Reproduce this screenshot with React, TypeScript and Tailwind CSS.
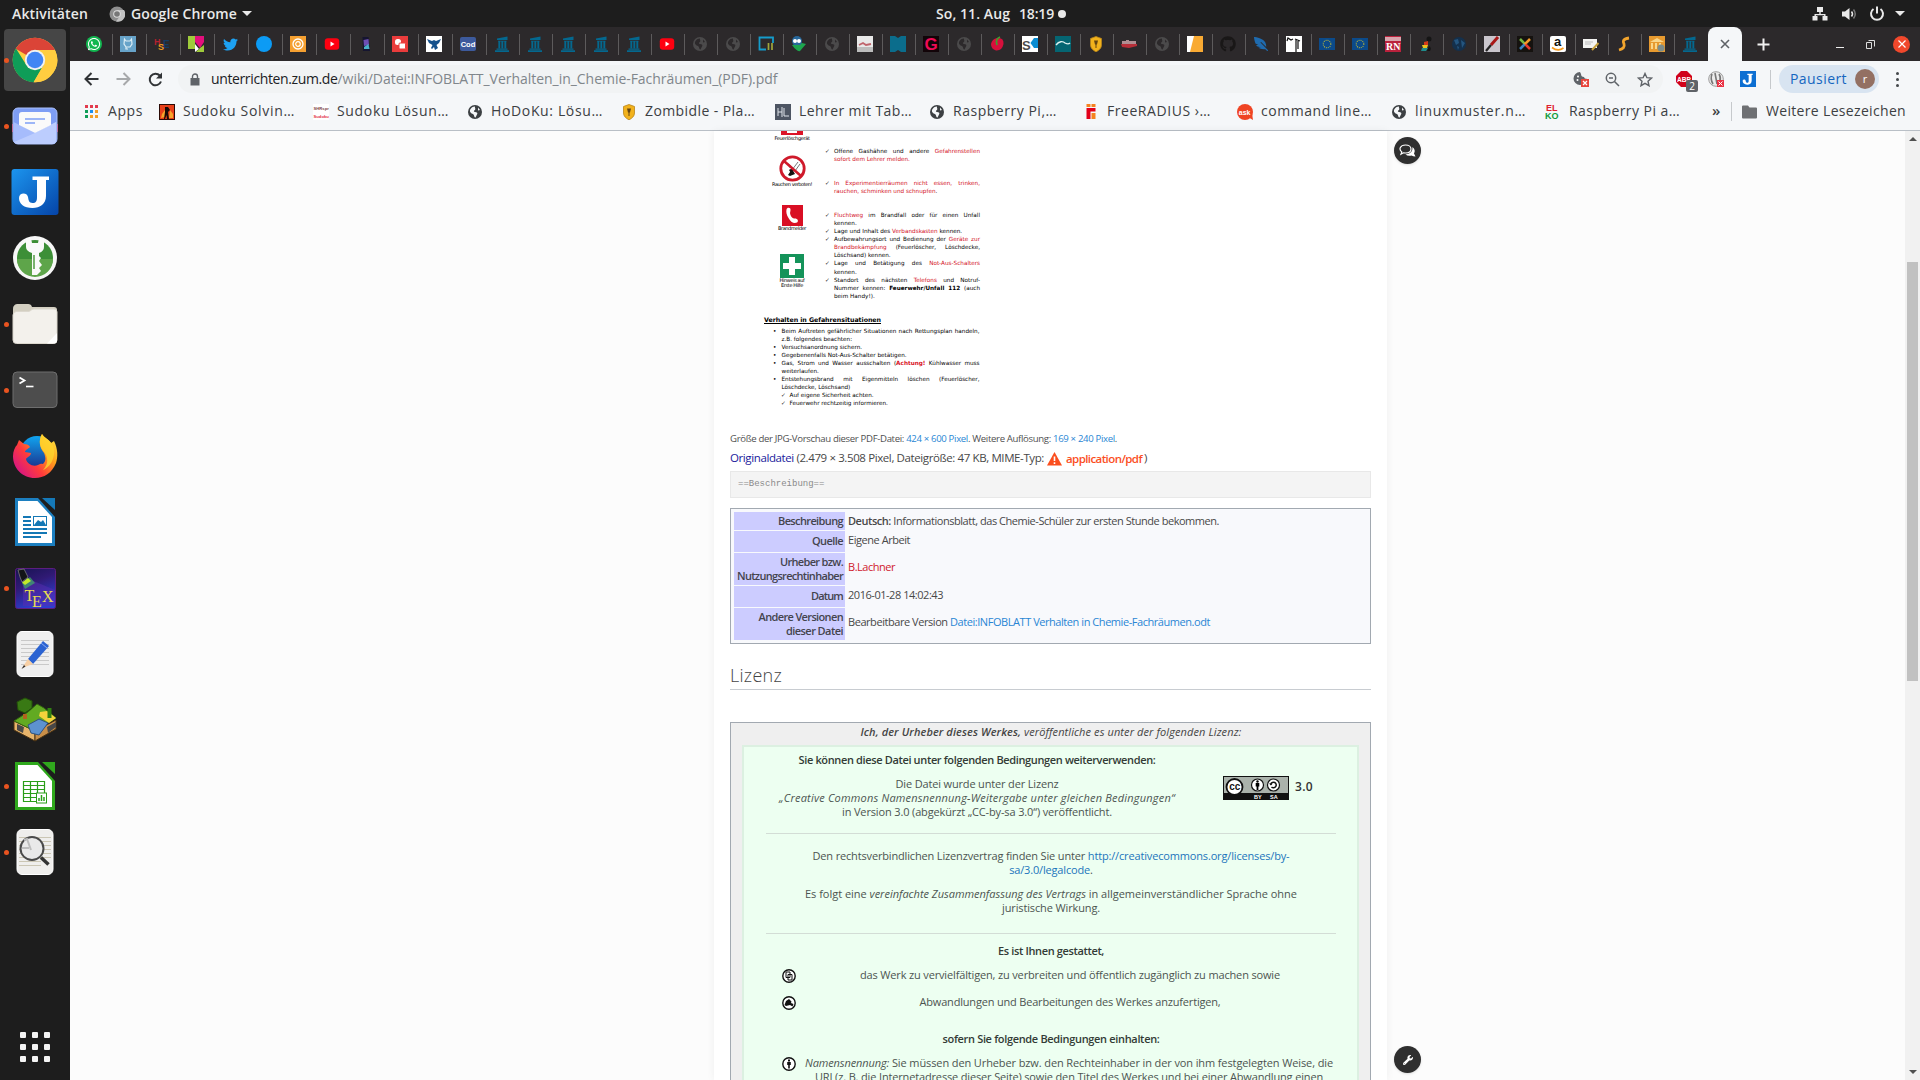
import React, { useLayoutEffect, useRef, useState } from "react";
import { FaWhatsapp, FaTwitter, FaGithub, FaWrench, FaFeatherAlt } from "react-icons/fa";

/** A single line of text whose tracking is computed so that it spans the given width. */
function Fit({ w, className = "", children }: { w: number; className?: string; children: React.ReactNode }) {
  const ref = useRef<HTMLSpanElement>(null);
  const [sp, setSp] = useState<number | null>(null);
  useLayoutEffect(() => {
    const el = ref.current;
    if (!el || sp !== null) return;
    const n = (el.textContent || "").length || 1;
    setSp((w - el.getBoundingClientRect().width) / n);
  }, [w, sp]);
  return (
    <span ref={ref} className={"inline-block shrink-0 whitespace-nowrap " + className} style={{ letterSpacing: sp === null ? undefined : `${sp}px` }}>
      {children}
    </span>
  );
}

/* ---------- dock ---------- */

function ChromeLogo() {
  return (
    <svg width="48" height="48" viewBox="0 0 48 48">
      <circle cx="24" cy="24" r="22.3" fill="#ffcd40" />
      <path d="M24 24 L4.7 12.8 A22.3 22.3 0 0 1 43.3 12.8 L43.7 14 H24 Z" fill="#db4437" />
      <path d="M4.7 12.8 A22.3 22.3 0 0 0 22.6 46.3 L32.6 29 L24 24 L15.3 29 L5 12.4 Z" fill="#0f9d58" />
      <path d="M24 14 H43.9 A22.3 22.3 0 0 1 22.6 46.3 L32.7 29 Z" fill="#ffcd40" />
      <circle cx="24" cy="24" r="10.2" fill="#f1f1f1" />
      <circle cx="24" cy="24" r="8.3" fill="#4285f4" />
    </svg>
  );
}
function MailLogo() {
  return (
    <svg width="48" height="48" viewBox="0 0 48 48">
      <rect x="1" y="22" width="46" height="8" fill="#d81b3c" />
      <rect x="2" y="6" width="44" height="36" rx="5" fill="#7e9ef5" stroke="#a9bffb" />
      <path d="M2.500 20 L24 31 L45.500 20 V38 a4 4 0 0 1-4 4 H6.500 a4 4 0 0 1-4-4z" fill="#a6bcfc" />
      <path d="M3 40 L24 31 L45 20 V38 a4 4 0 0 1-4 4 H6z" fill="#bccdfe" />
      <path d="M8 23 V13 a3 3 0 0 1 3-3 H37 a3 3 0 0 1 3 3 V23 L24 31z" fill="#fafafa" />
      <path d="M14 17 H34 M14 21 H24" stroke="#9db6f7" strokeWidth="2" />
    </svg>
  );
}
function JoplinLogo() {
  return (
    <svg width="48" height="48" viewBox="0 0 48 48">
      <defs>
        <linearGradient id="jop" x1="0" y1="0" x2="1" y2="1">
          <stop offset="0" stopColor="#1c95ee" />
          <stop offset="1" stopColor="#0544a8" />
        </linearGradient>
      </defs>
      <rect x="0.500" y="1" width="47" height="46" rx="3" fill="url(#jop)" />
      <path d="M21.500 8.500 H38 V12 H35 V28 C35 36 29 40 21.500 40 C13 40 8 36 8 30 C8 24.500 16 24 17 29 C17.500 32 18 35 21.500 35 C25 35 26 33 26 29 V12 H21.500z" fill="#fff" />
    </svg>
  );
}
function KeyLogo() {
  return (
    <svg width="48" height="48" viewBox="0 0 48 48">
      <circle cx="24" cy="24" r="22" fill="#f7f7f7" />
      <circle cx="24" cy="24" r="18" fill="#3d8f37" />
      <path d="M6 25 A18 18 0 0 0 42 25z" fill="#5ea54a" />
      <path d="M15 5 Q15 4 20 4 L21 9 H27 L28 4 Q33 4 33 6 V13 Q33 17 28 19 V22 L30 24 L28 27 L31 31 L28 34 L30 37 L26 41 H21 V19 Q15 17 15 13z" fill="#fafafa" />
      <path d="M23 21 V35" stroke="#4f9a40" strokeWidth="1.500" />
    </svg>
  );
}
function FolderLogo() {
  return (
    <svg width="48" height="48" viewBox="0 0 48 48">
      <path d="M2 9 a5 5 0 0 1 4-5 H17 a4 4 0 0 1 4 3 H43 a3 3 0 0 1 3 3 V24 H2z" fill="#d3cfc1" />
      <path d="M2 15 a4 4 0 0 1 3-3.500 H17 C20 11.500 20 9 23 9 H43 a3 3 0 0 1 3 3 V40 a3.500 3.500 0 0 1-3.500 3.500 H5.500 A3.500 3.500 0 0 1 2 40z" fill="#f3f1ec" stroke="#dcd8ce" />
      <path d="M46 33 L36 43.500 H43 a3 3 0 0 0 3-3z" fill="#fff" />
    </svg>
  );
}
function TerminalLogo() {
  return (
    <svg width="48" height="48" viewBox="0 0 48 48">
      <rect x="2" y="6" width="44" height="35.500" rx="4" fill="#4d4d4d" stroke="#6e6e6e" />
      <path d="M8.500 11.500 L13.500 14.500 L8.500 17.500" fill="none" stroke="#fff" strokeWidth="1.800" />
      <path d="M15 20.500 H22.500" stroke="#fff" strokeWidth="1.600" />
    </svg>
  );
}
function FirefoxLogo() {
  return (
    <svg width="48" height="48" viewBox="0 0 48 48">
      <defs>
        <linearGradient id="ffx" x1="1" y1="0" x2="0" y2="0.800">
          <stop offset="0" stopColor="#fff14c" />
          <stop offset="0.350" stopColor="#ffa21a" />
          <stop offset="0.650" stopColor="#ff3b3b" />
          <stop offset="1" stopColor="#d2128b" />
        </linearGradient>
        <linearGradient id="ffb" x1="0" y1="0" x2="0" y2="1">
          <stop offset="0" stopColor="#10a5f0" />
          <stop offset="1" stopColor="#1b2a86" />
        </linearGradient>
      </defs>
      <circle cx="26" cy="21" r="17" fill="url(#ffb)" />
      <path d="M31 2 C33 6 38 7 40 11 L43 9 C47 17 47 25 45 31 C41 41 33 46 24 46 C11 46 2 36 2 24 C2 19 4 15 6 13 L8 8 L13 12 C16 12 18 13 19 15 C17 17 14 18 14 20 L20 21 C20 24 16 25 15 27 C16 32 22 35 27 33 C30 31 32 32 32 32 C35 29 35 26 33 21 C29 16 27 9 31 2z" fill="url(#ffx)" />
      <path d="M31 2 C33 6 38 7 41 12 C46 20 42 34 32 38 C38 32 37 25 33 20 C29 16 27 9 31 2z" fill="#ffd62e" opacity="0.800" />
    </svg>
  );
}
function WriterLogo() {
  return (
    <svg width="48" height="48" viewBox="0 0 48 48">
      <path d="M4 0 H27 L44 19 V48 H4z" fill="#1c7fc0" />
      <path d="M31 0 H44 V12 Z" fill="#1579b8" />
      <path d="M7 3 H26.500 L41 19 V45 H7z" fill="#fff" />
      <path d="M12 19 H20 M12 23 H20 M12 27 H20 M12 31 H36 M12 35 H36 M12 39 H30" stroke="#1478b5" strokeWidth="1.800" />
      <rect x="22.500" y="18.500" width="13" height="9" fill="#fff" stroke="#1478b5" />
      <path d="M23 27 L27 22 L30 24 L32 22 L35 27z" fill="#1478b5" />
    </svg>
  );
}
function TexLogo() {
  return (
    <svg width="48" height="48" viewBox="0 0 48 48">
      <defs>
        <linearGradient id="tex" x1="0" y1="0" x2="0.400" y2="1">
          <stop offset="0" stopColor="#161450" />
          <stop offset="0.450" stopColor="#301a75" />
          <stop offset="1" stopColor="#2d3ed0" />
        </linearGradient>
      </defs>
      <rect x="4.500" y="4.500" width="40" height="40" rx="2" fill="url(#tex)" stroke="#5c1d80" />
      <path d="M12 22 L20 16 L44 26 V42 H12z" fill="#5a2bb0" opacity="0.500" />
      <path d="M11 19 L19 13 L24 19 L14 25z" fill="#3fae6a" opacity="0.700" />
      <path d="M11 18.500 L17 14 L20 17 L14 21z" fill="#c2ea2a" />
      <path d="M7 6 L13 5 L15 9 L17 13 L11 18 L9 13z" fill="#121417" stroke="#7b7b7b" strokeWidth="0.800" />
      <text x="13.500" y="37" fontFamily="Liberation Serif" fontSize="16" fill="#e8dc50">T</text>
      <text x="21" y="42.500" fontFamily="Liberation Serif" fontSize="16" fill="#e8dc50">E</text>
      <text x="31" y="38" fontFamily="Liberation Serif" fontSize="16" fill="#e8dc50">X</text>
    </svg>
  );
}
function EditorLogo() {
  return (
    <svg width="48" height="48" viewBox="0 0 48 48">
      <rect x="6" y="1.500" width="36" height="45" rx="5" fill="#efefef" stroke="#fff" />
      <path d="M10 10.500 H38 M10 14.500 H38 M10 18.500 H38 M10 22.500 H38 M10 26.500 H38 M10 30.500 H38 M10 34.500 H38" stroke="#c9c9c9" />
      <path d="M17 29 L32 11 L38 16 L22 34z" fill="#2b63d2" />
      <path d="M17 29 L22 34 L11 38z" fill="#f7cfa4" />
      <path d="M13 35 L14.500 36.500 L10.500 39z" fill="#333" />
      <path d="M30 13 L36 18" stroke="#87aaf3" />
    </svg>
  );
}
function MinetestLogo() {
  return (
    <svg width="48" height="48" viewBox="0 0 48 48">
      <path d="M3 25 L24 35 V45 L3 34z" fill="#e7b46b" stroke="#4a3213" />
      <path d="M24 35 L45 24 V33 L24 45z" fill="#c98f49" stroke="#4a3213" />
      <path d="M3 25 L17 16 L26 8 L33 12 L45 22 L24 35z" fill="#62aa22" stroke="#33670f" />
      <path d="M29 16 L36 15 L45 22 L38 27 L28 20z" fill="#f3d33c" />
      <path d="M17 29 L28 23 L37 27 L28 39 L20 37z" fill="#5d92cf" stroke="#31537e" />
      <path d="M6 28 L13 31 L12 37 L6 34z M36 31 L45 26 V31 L37 37z" fill="#484848" />
      <path d="M12 18 h4 v5 h-4z" fill="#b1641f" />
      <path d="M6 6 L14 2 L21 5 V12 L14 17 L7 14z" fill="#397914" stroke="#235009" />
      <path d="M36.500 12 h4 v10 h-4z" fill="#318112" />
    </svg>
  );
}
function CalcLogo() {
  return (
    <svg width="48" height="48" viewBox="0 0 48 48">
      <path d="M4 0 H27 L44 19 V48 H4z" fill="#2fa81c" />
      <path d="M31 0 H44 V12 Z" fill="#30a81d" />
      <path d="M7 3 H26.500 L41 19 V45 H7z" fill="#fff" />
      <path d="M12.500 19.500 H33.500 V39.500 H12.500z M12.500 23.500 H33.500 M12.500 27.500 H33.500 M12.500 31.500 H33.500 M12.500 35.500 H33.500 M19.500 19.500 V39.500 M26.500 19.500 V39.500" fill="none" stroke="#2a9e18" strokeWidth="1.200" />
      <rect x="25.500" y="31" width="10" height="10" fill="#fff" stroke="#2a9e18" />
      <path d="M28 39 V36 M30.500 39 V33 M33 39 V35" stroke="#2a9e18" strokeWidth="1.500" />
    </svg>
  );
}
function EvinceLogo() {
  return (
    <svg width="48" height="48" viewBox="0 0 48 48">
      <rect x="6" y="1.500" width="36" height="45" rx="5" fill="#efeeec" stroke="#fff" />
      <path d="M8 9.500 H40 M8 13.500 H40 M8 17.500 H40 M8 21.500 H40 M8 25.500 H40 M8 29.500 H40 M8 33.500 H30 M8 37.500 H30" stroke="#cbc6b4" />
      <circle cx="21" cy="20.500" r="11.500" fill="#e9e9e9" stroke="#4a4a4a" strokeWidth="2" />
      <path d="M13 12 L16 11 L20 22 M11 20 H18" stroke="#bdbdbd" fill="none" strokeWidth="2" />
      <path d="M30 29.500 L37.500 36.500" stroke="#333" strokeWidth="3.500" />
    </svg>
  );
}

const dock: [React.ReactNode, boolean][] = [
  [<ChromeLogo />, true],
  [<MailLogo />, true],
  [<JoplinLogo />, false],
  [<KeyLogo />, false],
  [<FolderLogo />, true],
  [<TerminalLogo />, true],
  [<FirefoxLogo />, false],
  [<WriterLogo />, false],
  [<TexLogo />, true],
  [<EditorLogo />, false],
  [<MinetestLogo />, false],
  [<CalcLogo />, true],
  [<EvinceLogo />, true],
];

function Dock() {
  return (
    <nav className="flex w-[70px] shrink-0 flex-col bg-[#1d1d1d]">
      {dock.map(([icon, running], i) => (
        <div key={i} className="flex h-[66px] items-center pl-1">
          <div className={"flex h-[62px] w-[62px] items-center rounded-[4px] " + (i === 0 ? "bg-[#464646]" : "")}>
            <i className={"h-[5px] w-[5px] rounded-full " + (running ? "bg-[#e95420]" : "")} />
            <div className="ml-[2px] h-12 w-12">{icon}</div>
          </div>
        </div>
      ))}
      <div className="mt-auto mb-[18px] ml-5 grid w-[30px] grid-cols-3 gap-[6px]">
        {Array.from({ length: 9 }, (_, i) => (
          <i key={i} className="h-[6px] w-[6px] rounded-[1px] bg-[#f5f5f5]" />
        ))}
      </div>
    </nav>
  );
}

/* ---------- favicons ---------- */

function Globe({ color = "#4b4a4b" }: { color?: string }) {
  return (
    <svg width="16" height="16" viewBox="0 0 16 16">
      <circle cx="8" cy="8" r="7" fill={color} />
      <path d="M3 6 C4 3.500 6 2.500 8 2.500 C7.500 4 9 4.500 8 6 C6.500 6.500 6.500 8 8 8 C10 8 11 9 10 10.500 L8.500 13.500 C7 13.500 7.500 11 6 10 C4 9.500 2.500 8 3 6z M11 3.500 L13 6 L11 6.500z" fill={color === "#4b4a4b" ? "#2c292b" : "#f5f7f9"} />
    </svg>
  );
}
function Box({ bg, children }: { bg?: string; children?: React.ReactNode }) {
  return (
    <svg width="16" height="16" viewBox="0 0 16 16">
      {bg && <rect width="16" height="16" fill={bg} />}
      {children}
    </svg>
  );
}
const Pillar = () => (
  <Box>
    <path d="M3 2.500 L13.500 0.500 V4 H3z M4 4.800 H12.500 V5.500 H4z" fill="#04688f" />
    <path d="M5.300 5 V12.500 M8.300 5 V12.500 M11.300 5 V12.500" stroke="#04688f" strokeWidth="1.900" />
    <path d="M2.500 12.500 H13.500 V13.800 H2.500z M1 14.300 H15 V16 H1z" fill="#04688f" />
  </Box>
);
const Youtube = () => (
  <Box>
    <rect x="0.800" y="2.300" width="14.400" height="11.400" rx="3" fill="#ff0010" />
    <path d="M6.500 5.500 L10.500 8 L6.500 10.500z" fill="#fff" />
  </Box>
);
const Eu = () => (
  <Box>
    <rect y="2" width="16" height="12" fill="#0b4a8a" />
    <circle cx="8" cy="8" r="3.800" fill="none" stroke="#b9b53a" strokeWidth="1.100" strokeDasharray="1 1" />
  </Box>
);
const Shield = () => (
  <Box>
    <path d="M8 0.500 L13.500 2.500 V9 C13.500 12 11 14.500 8 15.800 C5 14.500 2.500 12 2.500 9 V2.500z" fill="#f2b21c" stroke="#b9851b" strokeWidth="0.800" />
    <path d="M6 4.500 H10 L9 8.500 H7z M7.500 8 h1 v4 h-1z" fill="#664611" />
  </Box>
);
const Letter = ({ x = 1, y = 13, size = 14, fill, children }: { x?: number; y?: number; size?: number; fill: string; children: string }) => (
  <text x={x} y={y} fontFamily="Liberation Sans" fontWeight="bold" fontSize={size} fill={fill}>{children}</text>
);

const tabs: React.ReactNode[] = [
  <span className="flex h-4 w-4 items-center justify-center rounded-full bg-[#12b750]"><FaWhatsapp size={14} color="#fff" /></span>,
  <Box bg="#67a3c9"><path d="M4.500 3 L6 5 H10 L11.500 3 L12 8 L10 11 H6 L4 8z M6 11 V13 H8" fill="none" stroke="#dcedf5" strokeWidth="1.200" /></Box>,
  <Box><Letter x={0} y={9} size={9} fill="#b3222f">H</Letter><Letter x={9} y={12} size={10} fill="#143c66">E</Letter><Letter x={4} y={14} size={9} fill="#f09c1d">S</Letter></Box>,
  <Box><rect width="7" height="13" fill="#9fcb3b" /><path d="M7 0 H16 V6 L12 12 L7 6z" fill="#e3107c" /><path d="M7 8 L11 13 L7 16z" fill="#fff" /><path d="M12 12 L16 9 V16 H8z" fill="#9fcb3b" /></Box>,
  <FaTwitter size={15} color="#1da1f2" />,
  <Box><circle cx="8" cy="8" r="8" fill="#0c9bf5" /></Box>,
  <Box bg="#f5a031"><circle cx="8" cy="8" r="5" fill="none" stroke="#fff" strokeWidth="1.300" /><circle cx="8" cy="8" r="2.300" fill="none" stroke="#fff" strokeWidth="1.200" /></Box>,
  <Youtube />,
  <Box><path d="M4.500 1 L10.500 1 L12 15 H5z" fill="#151530" /><path d="M5.500 4 L10.500 3 L11 9 L6 10z" fill="#6e4fb4" /><path d="M6 11 L10.500 8 L11.500 13 H6z" fill="#4ab0c8" /></Box>,
  <Box bg="#ea3c3c"><rect x="3" y="3" width="6" height="6" rx="2.500" fill="#fff" /><rect x="7" y="7" width="6.500" height="6" rx="1" fill="#fff" stroke="#ea3c3c" /></Box>,
  <Box bg="#fff"><path d="M1 3 L6 5 L8 4 L10 5 L15 3 L13 7 L10.500 9 L12 12 L9 14 L8 11 L6 13 L5 12 L6.500 9 L3 7z" fill="#14508c" /></Box>,
  <Box><rect y="1" width="16" height="14" rx="2" fill="#3d5a9c" /><Letter x={0.700} y={10.500} size={7.500} fill="#fff">Cod</Letter></Box>,
  <Pillar />, <Pillar />, <Pillar />, <Pillar />, <Pillar />,
  <Youtube />,
  <Globe />, <Globe />,
  <Box><path d="M15 7 V1.500 H1.500 V13.500 H8" fill="none" stroke="#159ccb" strokeWidth="1.800" /><path d="M10.500 7 V14 M14 7 V14" stroke="#9fa53a" strokeWidth="1.700" /></Box>,
  <Box><path d="M1 9 Q6 16 9 15 L15 8 L11 7z" fill="#1da64e" /><circle cx="6" cy="5" r="5" fill="#27679b" /><circle cx="4" cy="5" r="2" fill="#fff" /><circle cx="8" cy="5" r="2" fill="#fff" /><path d="M3 9 L6 13 L9 9z" fill="#1da64e" /></Box>,
  <Globe />,
  <Box bg="#e9e9e9"><rect y="11" width="16" height="5" fill="#bdbdbd" /><path d="M2 9 L6 7 L9 9 L14 8" stroke="#c0646c" strokeWidth="1.800" fill="none" /></Box>,
  <Box bg="#0b6d8c"><path d="M5 0 H11 L8 2z M5 16 H11 L8 14z" fill="#2c292b" /></Box>,
  <Box bg="#120408"><Letter x={1.500} y={14} size={17} fill="#ed0b55">G</Letter></Box>,
  <Globe />,
  <Box><path d="M8 2 Q15 1 14.500 8 Q13 15 7 14.500 Q2 13 2 8 Q3 3 8 2z" fill="#d6103c" /><path d="M11 1 Q6 3 8 9" stroke="#3d9f2f" strokeWidth="1.800" fill="none" /></Box>,
  <Box bg="#fff"><Letter x={0} y={13.500} size={13} fill="#4d4d4d">S</Letter><path d="M16 2 L12 2 L8.500 7 L12 12 H16z" fill="#0a8cd2" /></Box>,
  <Box bg="#056572"><path d="M1 9 C4 5 8 5 10 7 C12 8 14 8 15 7" stroke="#dcefee" fill="none" strokeWidth="1.300" /></Box>,
  <Shield />,
  <Box><path d="M1 5 H5 V4 H8 V5 H15 V8 H1z" fill="#b08e92" /><path d="M0 8 H16 V10 L8 12 L1 11z" fill="#b82f39" /></Box>,
  <Globe />,
  <Box bg="#fff"><path d="M7 0 H16 V16 H3z" fill="#f9aa33" /></Box>,
  <FaGithub size={16} color="#191717" />,
  <FaFeatherAlt size={14} color="#1f6baf" className="-scale-x-100" />,
  <Box bg="#fff"><path d="M1 5 L2 2 L5 4 L7 3 M9 3 L14 5 M10 4 V16 M12 5 V13" stroke="#111" fill="none" strokeWidth="1.200" /></Box>,
  <Eu />, <Eu />,
  <Box bg="#b9213c"><rect y="1" width="16" height="4" fill="#d8a4ac" /><text x="1" y="14" fontSize="10" fontFamily="Liberation Serif" fontWeight="bold" fill="#fff">RN</text></Box>,
  <Box><circle cx="11" cy="3" r="2.500" fill="#151515" /><path d="M6 6 L10 5 L10 9 L6 9z" fill="#d23a1a" /><path d="M4 9 H10 L9 12 H5z" fill="#e6c320" /><path d="M4 12 H10 L8 15 H3z" fill="#1f8b8c" /><path d="M11 10 Q14 12 12 15 H9z" fill="#151515" /></Box>,
  <Box><circle cx="8" cy="8" r="7" fill="#14304c" /><path d="M3 4 L7 3 L8 7 L5 9z M10 4 L14 7 L11 12z M6 10 L8 11 L7 14z" fill="#24557f" /></Box>,
  <Box bg="#c9c5cc"><path d="M14 1 L7 9" stroke="#a81616" strokeWidth="3" /><path d="M7 9 L2 15" stroke="#222" strokeWidth="2.200" /></Box>,
  <Box bg="#15120f"><path d="M3 3 L9 9" stroke="#73b943" strokeWidth="2.500" /><path d="M13 3 L7 9" stroke="#f49a2a" strokeWidth="2.500" /><path d="M13 13 L8.500 8.500" stroke="#e5392c" strokeWidth="2.500" /><path d="M3 13 L7.500 8.500" stroke="#3b83c0" strokeWidth="2.500" /></Box>,
  <Box><rect width="16" height="16" rx="2" fill="#fff" /><Letter x={4} y={10} size={13} fill="#111">a</Letter><path d="M2 11.500 Q8 16 13.500 12" stroke="#f79a1c" strokeWidth="1.600" fill="none" /></Box>,
  <Box><rect y="3" width="14" height="9" fill="#f3f3f1" /><path d="M2 6 H10 M2 8 H8" stroke="#bbb" /><path d="M15.500 7 L9 14" stroke="#c6a03c" strokeWidth="2" /></Box>,
  <Box><path d="M13 2 C6 3 7 6 8 8 C9 11 7 13 3 14" stroke="#f3a52d" strokeWidth="2.800" fill="none" /></Box>,
  <Box bg="#e79a2f"><path d="M1 6 L8 2 L15 6z M2 7 h2 v6 h-2z M6 7 h2 v6 h-2z M10 7 h2 v6 h-2z" fill="#f9d68b" /><circle cx="12" cy="12" r="3.500" fill="#7c8c8a" /></Box>,
  <Pillar />,
];

const bookmarks: [React.ReactNode, string, number][] = [
  [<Box bg="#2a0a06"><rect x="1" y="1" width="14" height="14" fill="#e7401a" /><path d="M3 10 L6 6 V13 L2 14z M11 6 L14 10 V14 H10z" fill="#f7a52b" /><path d="M6 3 L9 3 L11 6 L9 8 L10 15 H8 L7.500 11 L6 15 H5 L6 8z" fill="#190a06" /></Box>, "Sudoku Solvin…", 112],
  [<Box bg="#fff"><Letter x={0.500} y={5.500} size={4.200} fill="#7b4448">SHRspr</Letter><Letter x={0.500} y={14} size={4.200} fill="#e22b3d">Sudoku</Letter></Box>, "Sudoku Lösun…", 112],
  [<Globe color="#3c4043" />, "HoDoKu: Lösu…", 112],
  [<Shield />, "Zombidle - Pla…", 110],
  [<Box bg="#4d5563"><path d="M3 4 V12 M3 8 H7 M7 3 V13 M9 4 V12 H14" stroke="#dfe4ea" fill="none" /></Box>, "Lehrer mit Tab…", 113],
  [<Globe color="#3c4043" />, "Raspberry Pi,…", 104],
  [<Box><path d="M3.500 0 h4 v3 h-4z M8.500 0 h4 v3 h-4z" fill="#f58220" /><path d="M3.500 4 H12.500 V7.500 H7.500 V15 H3.500z" fill="#e2001a" /><path d="M8.500 9 h4 v6 h-4z" fill="#f58220" /></Box>, "FreeRADIUS ›…", 104],
  [<Box><circle cx="8" cy="8" r="8" fill="#ef4423" /><path d="M11 13 L16 16 L15 9z" fill="#ef4423" /><Letter x={1.800} y={10.500} size={7} fill="#fff">ask</Letter></Box>, "command line…", 111],
  [<Globe color="#3c4043" />, "linuxmuster.n…", 111],
  [<Box><Letter x={1} y={7} size={9} fill="#e0202f">EL</Letter><Letter x={0} y={15} size={9} fill="#0f9a3c">KO</Letter></Box>, "Raspberry Pi a…", 111],
];

function TopBar() {
  return (
    <header className="flex h-[27px] shrink-0 items-center bg-[#1d1d1d] text-[14px] leading-[27px] font-semibold text-[#e9e9e9]">
      <div className="flex w-[936px] items-center pl-3">
        <Fit w={76}>Aktivitäten</Fit>
        <svg className="ml-[21px]" width="16" height="16" viewBox="0 0 16 16">
          <circle cx="8" cy="8" r="7.500" fill="#8e8e8e" />
          <path d="M8 4 H15 A7.500 7.500 0 0 1 7 15.500 L11 10z" fill="#c2c2c2" />
          <circle cx="8" cy="8" r="3.800" fill="#ddd" /><circle cx="8" cy="8" r="2.800" fill="#777" />
        </svg>
        <Fit w={106} className="ml-[6px]">Google Chrome</Fit>
        <i className="ml-[5px] border-x-[5px] border-t-[5px] border-x-transparent border-t-[#e9e9e9]" />
      </div>
      <Fit w={74}>So, 11. Aug</Fit>
      <Fit w={35} className="ml-[9px]">18:19</Fit>
      <i className="ml-1 h-2 w-2 rounded-full bg-[#e9e9e9]" />
      <div className="mr-[15px] ml-auto flex items-center">
        <svg width="16" height="16" viewBox="0 0 16 16" fill="#e9e9e9"><path d="M5 1h6v5H5z M0.500 10h5v4.500h-5z M10.500 10h5v4.500h-5z M7.300 6h1.400v2h4.800v2h-1.400v-.8H3.900v.8H2.500V8h4.800z" /></svg>
        <svg className="ml-[13px]" width="16" height="16" viewBox="0 0 16 16"><path d="M1 5.500h3L8.500 2v12L4 10.500H1z" fill="#e9e9e9" /><path d="M10.500 5.500q2 2.500 0 5" stroke="#e9e9e9" fill="none" strokeWidth="1.500" /><path d="M12.500 3.500q3.500 4.500 0 9" stroke="#777" fill="none" strokeWidth="1.500" /></svg>
        <svg className="ml-3" width="16" height="16" viewBox="0 0 16 16" fill="none" stroke="#e9e9e9" strokeWidth="2"><path d="M4.500 3a6 6 0 1 0 7 0M8 0.500V7.500" /></svg>
        <i className="ml-[10px] border-x-[5px] border-t-[5px] border-x-transparent border-t-[#e9e9e9]" />
      </div>
    </header>
  );
}

function TabStrip() {
  return (
    <div className="flex h-[34px] shrink-0 items-center bg-[#2c292b] pl-[9px]">
      {tabs.map((t, i) => (
        <div key={i} className={"flex h-[21px] shrink-0 items-center pl-[7px] " + (i < 12 ? "w-[34px] " : "w-[33px] ") + (i < tabs.length - 1 ? "border-r border-[#5d5b5c]" : "")}>
          <span className="flex h-4 w-4 items-center justify-center">{t}</span>
        </div>
      ))}
      <div className="mt-auto flex h-[34px] w-[34px] shrink-0 items-center justify-center rounded-t-[8px] bg-[#f5f7f9]">
        <svg width="10" height="10" viewBox="0 0 10 10" stroke="#5f6368" strokeWidth="1.600"><path d="M1 1L9 9M9 1L1 9" /></svg>
      </div>
      <svg className="ml-[15px]" width="13" height="13" viewBox="0 0 13 13" stroke="#f1f1f1" strokeWidth="2"><path d="M6.500 0.500V12.500M0.500 6.500H12.500" /></svg>
      <i className="mt-[6px] ml-[66px] h-[1px] w-2 bg-[#eee]" />
      <svg className="ml-[22px]" width="9" height="9" viewBox="0 0 9 9" fill="none" stroke="#ddd"><path d="M.5 2.500h5v6h-5z M2.500 0.500h6v6" /></svg>
      <div className="ml-[18px] flex h-[17px] w-[17px] items-center justify-center rounded-full bg-[#f1482c]">
        <svg width="8" height="8" viewBox="0 0 8 8" stroke="#fff" strokeWidth="1.200"><path d="M.5.5L7.500 7.500M7.500.5L.5 7.500" /></svg>
      </div>
    </div>
  );
}

function Toolbar() {
  return (
    <div className="flex h-[36px] shrink-0 items-center pl-[14px]">
      <svg width="15" height="14" viewBox="0 0 15 14" fill="none" stroke="#303336" strokeWidth="2"><path d="M14.500 7H1.500M7.500 1L1.500 7L7.500 13" /></svg>
      <svg className="ml-[17px]" width="15" height="14" viewBox="0 0 15 14" fill="none" stroke="#a7a9ab" strokeWidth="2"><path d="M0.500 7H13.500M7.500 1L13.500 7L7.500 13" /></svg>
      <svg className="ml-[17px]" width="15" height="15" viewBox="0 0 15 15" fill="none" stroke="#303336" strokeWidth="2"><path d="M13 9.500A5.800 5.800 0 1 1 11.800 3.500" /><path d="M14 0.500V6.500H8z" fill="#303336" stroke="none" /></svg>
      <div className="ml-[15px] flex h-7 w-[1485px] shrink-0 items-center rounded-full bg-[#f1f3f4] pl-[12px]">
        <svg width="10" height="13" viewBox="0 0 10 13"><path d="M0.500 5h9v7.500h-9z" fill="#5f6368" /><path d="M2.500 5V3.500a2.500 2.500 0 0 1 5 0V5" fill="none" stroke="#5f6368" strokeWidth="1.400" /></svg>
        <Fit w={126.500} className="ml-[11px] text-[14px] leading-7 text-[#202124]">unterrichten.zum.de</Fit>
        <Fit w={440} className="text-[14px] leading-7 text-[#80868b]">/wiki/Datei:INFOBLATT_Verhalten_in_Chemie-Fachräumen_(PDF).pdf</Fit>
        <svg className="ml-[795px]" width="16" height="16" viewBox="0 0 16 16"><path d="M7 1 A6.500 6.500 0 1 0 13.500 7.500 A2 2 0 0 1 11 6 A3 3 0 0 1 8 3z" fill="#5f6368" /><circle cx="5" cy="5.500" r="1" fill="#fff" /><circle cx="4.500" cy="9" r="1" fill="#fff" /><rect x="8" y="8" width="8" height="8" fill="#e8453c" /><path d="M10 10l4 4M14 10l-4 4" stroke="#fff" strokeWidth="1.200" /></svg>
        <svg className="ml-4" width="15" height="15" viewBox="0 0 15 15" fill="none" stroke="#5f6368" strokeWidth="1.500"><circle cx="6" cy="6" r="4.700" /><path d="M9.500 9.500L14 14M4 6H8" /></svg>
        <svg className="ml-[17px]" width="16" height="15" viewBox="0 0 16 15" fill="none" stroke="#5f6368" strokeWidth="1.400"><path d="M8 1.500L9.900 5.700L14.500 6.100L11 9.200L12 13.700L8 11.300L4 13.700L5 9.200L1.500 6.100L6.100 5.700z" /></svg>
      </div>
      <div className="relative ml-[13px] h-4 w-4 shrink-0">
        <svg width="16" height="16" viewBox="0 0 16 16"><path d="M5 0h6l5 5v6l-5 5H5l-5-5V5z" fill="#d0021b" /><text x="1" y="10.500" fontFamily="Liberation Sans" fontWeight="bold" fontSize="6.600" fill="#fff">ABP</text></svg>
        <span className="absolute top-[9px] left-[10px] flex h-3 w-3 items-center justify-center rounded-[2px] bg-[#5f6368] text-[10px] text-white">2</span>
      </div>
      <svg className="ml-4 shrink-0" width="16" height="16" viewBox="0 0 16 16"><circle cx="8" cy="8" r="7.300" fill="#ececec" stroke="#9c9c9c" /><path d="M4 3 Q2 8 5 13 M7 2 L9 13 M11 3 Q13 6 12 10" stroke="#777" strokeWidth="1.600" fill="none" /><rect x="9" y="9" width="7" height="7" fill="#ea3345" /><path d="M10.500 10.500l4 4M14.500 10.500l-4 4" stroke="#fff" /></svg>
      <svg className="ml-4 shrink-0" width="16" height="16" viewBox="0 0 48 48"><rect width="48" height="48" fill="#0d6fd2" /><path d="M22 8 H38 V12 H35 V29 C35 37 29 41 21.500 41 C13 41 8 36 8 30 C8 24 16 24 17 29 C17.500 32 18 35 21.500 35 C25 35 26 33 26 29 V12 H22z" fill="#fff" /></svg>
      <i className="ml-[14px] h-[19px] w-px shrink-0 bg-[#c6c9cc]" />
      <div className="ml-2 flex h-7 w-[100px] shrink-0 items-center rounded-full bg-[#d8e4f1] pl-[11px]">
        <Fit w={57} className="text-[14px] leading-7 text-[#1566c0]">Pausiert</Fit>
        <span className="ml-[8px] flex h-5 w-5 items-center justify-center rounded-full bg-[#937063] text-[11px] text-white">r</span>
      </div>
      <div className="ml-[17px] flex flex-col gap-[3px]">
        <i className="h-[3px] w-[3px] rounded-full bg-[#44474a]" /><i className="h-[3px] w-[3px] rounded-full bg-[#44474a]" /><i className="h-[3px] w-[3px] rounded-full bg-[#44474a]" />
      </div>
    </div>
  );
}

const dotColors = ["bg-[#e23b4e]", "bg-[#e23b4e]", "bg-[#e23b4e]", "bg-[#0f9d58]", "bg-[#1a90f0]", "bg-[#f4a028]", "bg-[#0f9d58]", "bg-[#f4a028]", "bg-[#f4a028]"];

function BookmarkBar() {
  return (
    <div className="flex h-[33px] shrink-0 items-center pb-[4px] pl-[15px] text-[14px] leading-5 text-[#3c4043]">
      <div className="grid grid-cols-3 gap-[2px]">
        {dotColors.map((c, i) => <i key={i} className={"h-[3px] w-[3px] " + c} />)}
      </div>
      <Fit w={35} className="mb-[1px] ml-[10px]">Apps</Fit>
      <div className="ml-4 flex shrink-0">
        {bookmarks.map(([icon, label, w]) => (
          <div key={label} className="flex w-[154px] shrink-0 items-center gap-2">
            {icon}
            <Fit w={w} className="mb-[1px]">{label}</Fit>
          </div>
        ))}
      </div>
      <span className="mb-[3px] ml-[13px] w-[15px] text-[15px] font-semibold">»</span>
      <i className="ml-[4px] h-[19px] w-px bg-[#c6c9cc]" />
      <svg className="ml-[10px]" width="15" height="14" viewBox="0 0 15 14"><path d="M0 1.500 Q0 0.500 1 0.500 H6 L7.500 2.500 H14 Q15 2.500 15 3.500 V12.500 Q15 13.500 14 13.500 H1 Q0 13.500 0 12.500z" fill="#6e7073" /></svg>
      <Fit w={140} className="mb-[1px] ml-[9px]">Weitere Lesezeichen</Fit>
    </div>
  );
}

/* ---------- document preview ---------- */

const Red = ({ children }: { children: React.ReactNode }) => <span className="text-[#d3101d]">{children}</span>;

function Line({ mark = "", stretch = false, children }: { mark?: string; stretch?: boolean; children: React.ReactNode }) {
  return (
    <div className="flex h-[8.060px]">
      <span className="w-[9px] shrink-0">{mark}</span>
      <span className={"w-[146px] shrink-0 whitespace-nowrap " + (stretch ? "[text-align-last:justify]" : "")}>{children}</span>
    </div>
  );
}
function WideLine({ mark = "", stretch = false, children }: { mark?: string; stretch?: boolean; children: React.ReactNode }) {
  return (
    <div className="flex h-[8.060px]">
      <span className="w-[8.500px] shrink-0">{mark}</span>
      <span className={"w-[198px] shrink-0 whitespace-nowrap " + (stretch ? "[text-align-last:justify]" : "")}>{children}</span>
    </div>
  );
}

function Preview() {
  return (
    <section className="h-[299px] overflow-hidden pl-[32px] font-['DejaVu_Sans'] text-[5.700px] leading-[8.060px] text-black">
      <div className="flex">
        <div className="flex w-[60px] flex-col items-center text-[5px] leading-[5px]">
          <div className="flex h-[4px] w-[22px] items-start justify-center bg-[#dc1428]"><i className="h-[2px] w-[10px] bg-white" /></div>
          <Fit w={35} className="mt-[1px]">Feuerlöschgerät</Fit>
          <svg className="mt-[14px]" width="27" height="27" viewBox="0 0 27 27">
            <circle cx="13.500" cy="13.500" r="11.500" fill="#fff" />
            <path d="M9 20 L13 14 L16 19 L11 21z M10 15 q2-2 5 0 l-2 5z" fill="#111" />
            <path d="M13 15 L19 7 M16 16 L21 9 M8 9 q4 0 3 4" stroke="#777" fill="none" />
            <path d="M5 6 L22 21" stroke="#cf1a2b" strokeWidth="2.500" />
            <circle cx="13.500" cy="13.500" r="11.700" fill="none" stroke="#cf1a2b" strokeWidth="2.800" />
          </svg>
          <Fit w={40}>Rauchen verboten!</Fit>
          <svg className="mt-[18px]" width="21" height="21" viewBox="0 0 21 21">
            <rect width="21" height="21" fill="#d90f24" />
            <path d="M4.500 4.500 C5 2 9 2.500 8.500 5 C8.500 7 7.500 7.500 8.500 10 C9.500 12.500 11 14 13 13.500 C15.500 13.500 17 16 15 17.500 C12 19 8.500 17 6.500 13 C4.500 10 4 7 4.500 4.500z" fill="#fff" />
          </svg>
          <Fit w={28}>Brandmelder</Fit>
          <svg className="mt-[23px]" width="24" height="24" viewBox="0 0 24 24">
            <rect width="24" height="24" fill="#14935a" />
            <path d="M9 3h6v6h6v6h-6v6H9v-6H3V9h6z" fill="#fff" />
          </svg>
          <Fit w={25}>Hinweis auf</Fit>
          <Fit w={22}>Erste Hilfe</Fit>
        </div>
        <div className="pt-4 pl-[3px]">
          <Line mark="✓" stretch>Offene Gashähne und andere <Red>Gefahrenstellen</Red></Line>
          <Line><Red>sofort dem Lehrer melden.</Red></Line>
          <div className="h-4" />
          <Line mark="✓" stretch><Red>In Experimentierräumen nicht essen, trinken,</Red></Line>
          <Line><Red>rauchen, schminken und schnupfen</Red>.</Line>
          <div className="h-4" />
          <Line mark="✓" stretch><Red>Fluchtweg</Red> im Brandfall oder für einen Unfall</Line>
          <Line>kennen.</Line>
          <Line mark="✓">Lage und Inhalt des <Red>Verbandskasten</Red> kennen.</Line>
          <Line mark="✓" stretch>Aufbewahrungsort und Bedienung der <Red>Geräte zur</Red></Line>
          <Line stretch><Red>Brandbekämpfung</Red> (Feuerlöscher, Löschdecke,</Line>
          <Line>Löschsand) kennen.</Line>
          <Line mark="✓" stretch>Lage und Betätigung des <Red>Not-Aus-Schalters</Red></Line>
          <Line>kennen.</Line>
          <Line mark="✓" stretch>Standort des nächsten <Red>Telefons</Red> und Notruf-</Line>
          <Line stretch>Nummer kennen: <b>Feuerwehr/Unfall 112</b> (auch</Line>
          <Line>beim Handy!).</Line>
        </div>
      </div>
      <h3 className="mt-[16px] h-[11px] pl-[2px]">
        <Fit w={117} className="text-[6.300px] leading-[8px] font-bold underline">Verhalten in Gefahrensituationen</Fit>
      </h3>
      <div className="pl-[11px]">
        <WideLine mark="•" stretch>Beim Auftreten gefährlicher Situationen nach Rettungsplan handeln,</WideLine>
        <WideLine>z.B. folgendes beachten:</WideLine>
        <WideLine mark="•">Versuchsanordnung sichern.</WideLine>
        <WideLine mark="•">Gegebenenfalls Not-Aus-Schalter betätigen.</WideLine>
        <WideLine mark="•" stretch>Gas, Strom und Wasser ausschalten (<b className="text-[#d8101e]">Achtung!</b> Kühlwasser muss</WideLine>
        <WideLine>weiterlaufen.</WideLine>
        <WideLine mark="•" stretch>Entstehungsbrand mit Eigenmitteln löschen (Feuerlöscher,</WideLine>
        <WideLine>Löschdecke, Löschsand)</WideLine>
        <div className="pl-[8px]">
          <WideLine mark="✓">Auf eigene Sicherheit achten.</WideLine>
          <WideLine mark="✓">Feuerwehr rechtzeitig informieren.</WideLine>
        </div>
      </div>
    </section>
  );
}

/* ---------- file details ---------- */

const Link = ({ children }: { children: React.ReactNode }) => <span className="text-[#2a86d4]">{children}</span>;

function InfoTable() {
  const th = "bg-[#ccccff] w-[111px] pr-[2px] flex flex-col items-end justify-center shrink-0 font-semibold leading-[14px] text-[#44444e]";
  return (
    <div className="mt-[10px] flex h-[136px] flex-col gap-px border border-[#a2a9b1] bg-[#f8f9fc] p-[3px] text-[11px] leading-[14px] text-[#484848]">
      <div className="flex h-[18px]"><div className={th}><Fit w={65}>Beschreibung</Fit></div><div className="flex items-center pl-[3px]"><Fit w={371}><b className="font-semibold">Deutsch:</b> Informationsblatt, das Chemie-Schüler zur ersten Stunde bekommen.</Fit></div></div>
      <div className="flex h-[21px]"><div className={th + " pb-[2px]"}><Fit w={31}>Quelle</Fit></div><div className="flex items-center pb-[3px] pl-[3px]"><Fit w={62}>Eigene Arbeit</Fit></div></div>
      <div className="flex h-8"><div className={th}><Fit w={63}>Urheber bzw.</Fit><Fit w={106}>Nutzungsrechtinhaber</Fit></div><div className="flex items-center pb-[4px] pl-[3px] text-[#d0202c]"><Fit w={47}>B.Lachner</Fit></div></div>
      <div className="flex h-[21px]"><div className={th + " pb-[2px]"}><Fit w={32}>Datum</Fit></div><div className="flex items-center pb-[3px] pl-[3px]"><Fit w={95}>2016-01-28 14:02:43</Fit></div></div>
      <div className="flex h-8"><div className={th}><Fit w={84.500}>Andere Versionen</Fit><Fit w={57}>dieser Datei</Fit></div><div className="flex items-center pb-[4px] pl-[3px]"><Fit w={362}>Bearbeitbare Version <Link>Datei:INFOBLATT Verhalten in Chemie-Fachräumen.odt</Link></Fit></div></div>
    </div>
  );
}

function CcBadge() {
  return (
    <svg width="66" height="24" viewBox="0 0 66 24">
      <rect width="66" height="24" fill="#111" />
      <rect x="1" y="1" width="64" height="16" fill="#aab2ab" />
      <circle cx="11.500" cy="11" r="8" fill="#fff" stroke="#111" strokeWidth="1.800" />
      <text x="6.200" y="14" fontFamily="Liberation Sans" fontWeight="bold" fontSize="10" fill="#111">cc</text>
      <circle cx="34.500" cy="9" r="6" fill="#fff" stroke="#111" strokeWidth="1.200" />
      <circle cx="34.500" cy="5.500" r="1.200" /><path d="M32.700 7h3.600v3.500h-.9v3.500h-1.800v-3.500h-.9z" />
      <circle cx="50.500" cy="9" r="6" fill="#fff" stroke="#111" strokeWidth="1.200" />
      <path d="M47.800 8 A2.800 2.800 0 1 1 48.500 11" fill="none" stroke="#111" strokeWidth="1.500" /><path d="M46 7.500h3.800l-1.900 2z" />
      <text x="31" y="22.800" fontFamily="Liberation Sans" fontWeight="bold" fontSize="5.500" fill="#fff">BY</text>
      <text x="47" y="22.800" fontFamily="Liberation Sans" fontWeight="bold" fontSize="5.500" fill="#fff">SA</text>
    </svg>
  );
}

function TermRow({ icon, children, className = "" }: { icon: React.ReactNode; children: React.ReactNode; className?: string }) {
  return (
    <div className={"flex pl-[38px] " + className}>
      <svg className="mt-[1px] shrink-0" width="14" height="14" viewBox="0 0 14 14">
        <circle cx="7" cy="7" r="6.200" fill="#fff" stroke="#111" strokeWidth="1.400" />
        {icon}
      </svg>
      <div className="ml-[9px] flex w-[530px] shrink-0 flex-col items-center">{children}</div>
    </div>
  );
}

function License() {
  return (
    <div className="mt-8 h-[400px] border border-[#a2a9b1] bg-[#efefef] px-[11px] text-[11px] leading-[14px] text-[#4c5450]">
      <div className="flex h-[22px] justify-center pt-[2px] pl-[1px] text-[#444]"><Fit w={381} className="italic"><b className="font-semibold">Ich, der Urheber dieses Werkes,</b> veröffentliche es unter der folgenden Lizenz:</Fit></div>
      <div className="h-[400px] border-2 border-[#dcf0e1] bg-[#edfff1] pt-[6px]">
        <div className="flex">
          <div className="flex w-[466px] flex-col items-center">
            <Fit w={357} className="font-semibold text-[#333b36]">Sie können diese Datei unter folgenden Bedingungen weiterverwenden:</Fit>
            <Fit w={163} className="mt-[10px]">Die Datei wurde unter der Lizenz</Fit>
            <Fit w={396} className="italic">„Creative Commons Namensnennung-Weitergabe unter gleichen Bedingungen“</Fit>
            <Fit w={270}>in Version 3.0 (abgekürzt „CC-by-sa 3.0“) veröffentlicht.</Fit>
          </div>
          <div className="flex items-start pt-[23px] pl-[13px]">
            <CcBadge />
            <Fit w={18} className="mt-[4px] ml-[6px] text-[12px] font-semibold text-[#333]">3.0</Fit>
          </div>
        </div>
        <div className="mr-[21px] ml-[22px] mt-[14px] h-px bg-[#d3ddd6]" />
        <div className="mt-[15px] flex flex-col items-center pl-[1px]">
          <Fit w={477}>Den rechtsverbindlichen Lizenzvertrag finden Sie unter <span className="text-[#1b75bc]">http://creativecommons.org/licenses/by-</span></Fit>
          <Fit w={83.500}><span className="text-[#1b75bc]">sa/3.0/legalcode</span>.</Fit>
          <Fit w={492} className="mt-[10px]">Es folgt eine <i>vereinfachte Zusammenfassung des Vertrags</i> in allgemeinverständlicher Sprache ohne</Fit>
          <Fit w={98}>juristische Wirkung.</Fit>
        </div>
        <div className="mr-[21px] ml-[22px] mt-[18px] h-px bg-[#d3ddd6]" />
        <div className="mt-[10px] flex flex-col items-center pl-[1px] font-semibold text-[#333b36]"><Fit w={106}>Es ist Ihnen gestattet,</Fit></div>
        <TermRow className="mt-[10px]" icon={<path d="M4 3h4v5.500H4z M6 5.500h4v5.500H6z" fill="#fff" stroke="#111" />}>
          <Fit w={420}>das Werk zu vervielfältigen, zu verbreiten und öffentlich zugänglich zu machen sowie</Fit>
        </TermRow>
        <TermRow className="mt-[12px]" icon={<path d="M2.500 9 L4 5 L7 3 L9.500 5.500 L9 7 L11.500 8 L10.500 10.500 L8 9 L4 10z" fill="#111" />}>
          <Fit w={301}>Abwandlungen und Bearbeitungen des Werkes anzufertigen,</Fit>
        </TermRow>
        <div className="mt-[22px] flex flex-col items-center pl-[1px] font-semibold text-[#333b36]"><Fit w={217}>sofern Sie folgende Bedingungen einhalten:</Fit></div>
        <TermRow className="mt-[10px]" icon={<path d="M5.200 5h3.600v3h-1v3.500H6.200V8h-1z M6 2.500h2v2H6z" fill="#111" />}>
          <Fit w={528} className="-ml-[2px]"><i>Namensnennung:</i> Sie müssen den Urheber bzw. den Rechteinhaber in der von ihm festgelegten Weise, die</Fit>
          <Fit w={508} className="-ml-[2px]">URI (z. B. die Internetadresse dieser Seite) sowie den Titel des Werkes und bei einer Abwandlung einen</Fit>
        </TermRow>
      </div>
    </div>
  );
}

function Page() {
  return (
    <div className="flex min-h-0 flex-1 border-t border-[#b9bfc6] bg-[#fcfcfc]">
      <main className="ml-[644px] w-[673px] shrink-0 overflow-hidden bg-white px-4 shadow-[0_0_8px_rgba(0,0,0,0.06)]">
        <Preview />
        <div className="flex h-[18px] items-center pt-[1px] text-[9.600px] text-[#505050]">
          <Fit w={387}>Größe der JPG-Vorschau dieser PDF-Datei: <Link>424 × 600 Pixel</Link>. Weitere Auflösung: <Link>169 × 240 Pixel</Link>.</Fit>
        </div>
        <div className="flex h-5 items-center text-[11.500px] text-[#484848]">
          <Fit w={314}><span className="text-[#1a1a9c]">Originaldatei</span> (2.479 × 3.508 Pixel, Dateigröße: 47 KB, MIME-Typ:</Fit>
          <svg className="mt-[2px] ml-[3px]" width="15" height="14" viewBox="0 0 15 14"><path d="M7.500 0L15 13.500H0z" fill="#fb4e1e" /><path d="M7.500 4.500V9M7.500 10.200V12" stroke="#fff" strokeWidth="1.600" /></svg>
          <Fit w={76} className="mt-[2px] ml-1 font-semibold text-[#fb4e1e]">application/pdf</Fit>
          <span className="ml-[2px]">)</span>
        </div>
        <pre className="mt-[3px] h-[27px] border border-[#e8e8e8] bg-[#f4f4f4] pt-[6px] pl-[7px] font-['Liberation_Mono'] text-[9px] leading-[12px] text-[#8a8a8a]">==Beschreibung==</pre>
        <InfoTable />
        <h2 className="mt-[18px] flex h-[28px] items-center border-b border-[#c8ccd1] text-[18px] font-light text-[#444]"><Fit w={52}>Lizenz</Fit></h2>
        <License />
      </main>
      <div className="flex flex-1 flex-col justify-between pt-[6px] pb-[7px] pl-[7px]">
        <span className="flex h-[27px] w-[27px] items-center justify-center rounded-full bg-[#2f2f2f] shadow">
          <svg width="17" height="14" viewBox="0 0 17 14">
            <path d="M13.500 3 Q17 6 15 9.500 L16.500 12.500 Q14 12.500 12.500 11.500 Q9 12.500 6.500 10.500 Q14 10 13.500 3z" fill="#fff" />
            <path d="M6.500 1 C10 1 12 3 12 5 C12 7.500 9.500 9 6.500 9 L4.500 8.800 L2 10.200 L2.800 8 C-0.500 5.500 1 1 6.500 1z" fill="#2f2f2f" stroke="#fff" strokeWidth="1.200" />
          </svg>
        </span>
        <span className="flex h-[27px] w-[27px] items-center justify-center rounded-full bg-[#2f2f2f] shadow"><FaWrench size={10} color="#fff" /></span>
      </div>
      <div className="flex w-[15px] shrink-0 flex-col items-center justify-between bg-[#f1f1f1] py-[6px]">
        <i className="border-x-[4px] border-b-[4px] border-x-transparent border-b-[#505050]" />
        <i className="mt-[121px] mb-auto h-[419px] w-[11px] bg-[#c1c1c1]" />
        <i className="border-x-[4px] border-t-[4px] border-x-transparent border-t-[#505050]" />
      </div>
    </div>
  );
}

export default function App() {
  return (
    <div className="flex h-[1080px] w-[1920px] flex-col overflow-hidden font-['Open_Sans',sans-serif]">
      <TopBar />
      <div className="flex min-h-0 flex-1">
        <Dock />
        <div className="flex w-[1850px] flex-col bg-[#f5f7f9]">
          <TabStrip />
          <Toolbar />
          <BookmarkBar />
          <Page />
        </div>
      </div>
    </div>
  );
}
